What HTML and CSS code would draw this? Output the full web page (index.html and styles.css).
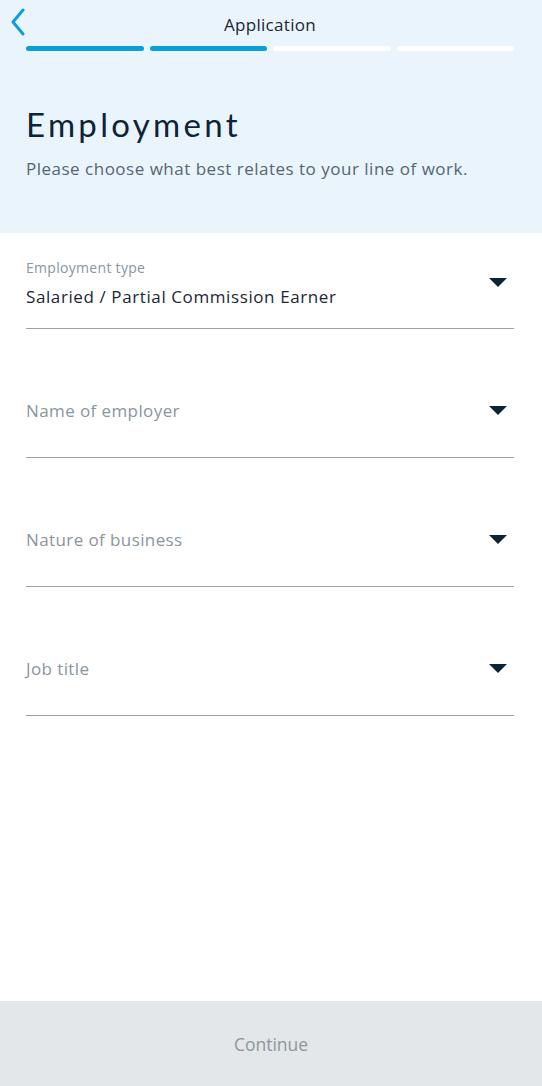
FILE: index.html
```html
<!DOCTYPE html>
<html lang="en">
<head>
  <meta charset="UTF-8" />
  <meta name="viewport" content="width=device-width, initial-scale=1.0"/>
  <title>Application - Employment</title>
  <link rel="stylesheet" href="styles.css">
</head>
<body>
  <header class="hero">
    <div class="topbar">
      <button class="back-btn" aria-label="Back">
        <svg width="16" height="28" viewBox="0 0 16 28">
          <path d="M13 2 L3 14 L13 26" fill="none" stroke="#0a9fdc" stroke-width="3" stroke-linecap="round" stroke-linejoin="round"/>
        </svg>
      </button>
      <div class="topbar-title">Application</div>
    </div>

    <!-- 진행 단계 -->
    <div class="progress">
      <span class="step done"></span>
      <span class="step done"></span>
      <span class="step"></span>
      <span class="step"></span>
    </div>

    <h1>Employment</h1>
    <p class="subtitle">Please choose what best relates to your line of work.</p>
  </header>

  <main class="form">
    <div class="field field-filled">
      <div class="field-text">
        <div class="field-label">Employment type</div>
        <div class="field-value">Salaried / Partial Commission Earner</div>
      </div>
      <span class="caret"></span>
    </div>
    <div class="field">
      <div class="field-text">
        <div class="field-placeholder">Name of employer</div>
      </div>
      <span class="caret"></span>
    </div>
    <div class="field">
      <div class="field-text">
        <div class="field-placeholder">Nature of business</div>
      </div>
      <span class="caret"></span>
    </div>
    <div class="field">
      <div class="field-text">
        <div class="field-placeholder">Job title</div>
      </div>
      <span class="caret"></span>
    </div>
  </main>

  <footer class="continue-bar">
    <button class="continue-btn" disabled>Continue</button>
  </footer>
</body>
</html>
```

FILE: styles.css
```css
html, body {
  margin: 0;
  padding: 0;
}

body {
  font-family: 'Open Sans', 'Liberation Sans', sans-serif;
  background: #fff;
  color: #1b2733;
  min-height: 100vh;
  display: flex;
  flex-direction: column;
}

.hero {
  background-color: #eaf4fd;
  padding: 0 28px 53px 26px;
  height: 233px;
  box-sizing: border-box;
}

.topbar {
  position: relative;
  height: 46px;
  display: flex;
  align-items: center;
  justify-content: center;
}

.back-btn {
  position: absolute;
  left: -16px;
  top: 8px;
  background: none;
  border: none;
  padding: 0;
  cursor: pointer;
}

.topbar-title {
  font-size: 17px;
  letter-spacing: 0.3px;
  color: #1d2630;
  margin-top: 2px;
}

.progress {
  display: flex;
  gap: 6px;
}
.step {
  flex: 1;
  height: 5px;
  border-radius: 3px;
  background: #fff;
}
.step.done {
  background: #0a9fdc;
}

h1 {
  font-family: Lato, 'Open Sans', sans-serif;
  font-size: 33px;
  font-weight: normal;
  line-height: 40px;
  letter-spacing: 3.3px;
  color: #0d2438;
  margin: 53px 0 0;
}

.subtitle {
  font-size: 17px;
  line-height: 22px;
  letter-spacing: 0.5px;
  color: #566573;
  margin: 14px 0 0;
}

.form {
  padding: 0 28px 0 26px;
  flex: 1;
}

.field {
  display: flex;
  align-items: center;
  padding: 71px 0 35px;
  border-bottom: 1.5px solid #9aa3a9;
}
.field-filled {
  padding: 26px 0 20px;
}
.field-text {
  flex: 1;
}
.field-label {
  font-size: 14px;
  line-height: 18px;
  letter-spacing: 0.3px;
  color: #8a959e;
  margin-bottom: 9px;
}
.field-value {
  font-size: 17px;
  line-height: 22px;
  letter-spacing: 0.6px;
  color: #1b2733;
}
.field-placeholder {
  font-size: 17px;
  line-height: 22px;
  letter-spacing: 0.4px;
  color: #8a959e;
}

.caret {
  width: 0;
  height: 0;
  border-left: 9px solid transparent;
  border-right: 9px solid transparent;
  border-top: 9px solid #0d2438;
  margin: 0 7px 2px 0;
}

.continue-bar {
  background-color: #e3e7e9;
  height: 85px;
  display: flex;
  align-items: center;
  justify-content: center;
}
.continue-btn {
  background: none;
  border: none;
  font-family: inherit;
  font-size: 17.5px;
  color: #8e979d;
}
```
